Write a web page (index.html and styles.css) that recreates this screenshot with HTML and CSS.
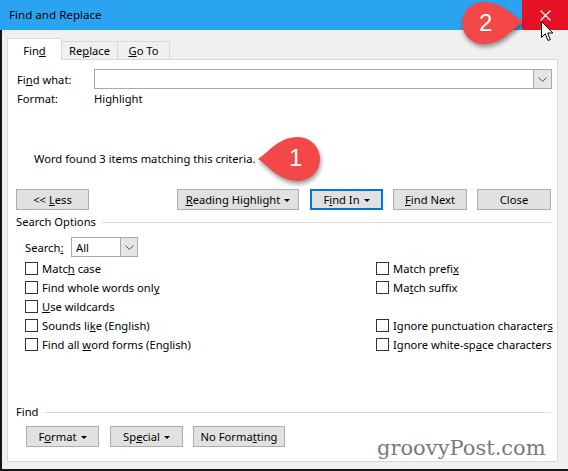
FILE: index.html
```html
<!DOCTYPE html>
<html>
<head>
<meta charset="utf-8">
<link rel="stylesheet" href="styles.css">
</head>
<body>
<div class="window">
  <div class="titlebar">
    <span class="title">Find and Replace</span>
    <div class="close">
      <svg width="11" height="11" viewBox="0 0 11 11"><path d="M0.5 0.5 L10.5 10.5 M10.5 0.5 L0.5 10.5" stroke="#fff" stroke-width="1.2" fill="none"/></svg>
    </div>
  </div>
  <div class="body">
    <div class="tabs">
      <div class="tab active"><span>Fin<u>d</u></span></div>
      <div class="tab t-replace"><span>Re<u>p</u>lace</span></div>
      <div class="tab t-goto"><span><u>G</u>o To</span></div>
    </div>
    <div class="panel">
      <div class="find-row">
        <span class="lbl">Fi<u>n</u>d what:</span>
        <div class="combo">
          <div class="combo-btn"><svg width="9" height="5" viewBox="0 0 9 5"><path d="M0.5 0.5 L4.5 4.5 L8.5 0.5" stroke="#555" fill="none"/></svg></div>
        </div>
      </div>
      <div class="format-row">
        <span class="lbl">Format:</span><span>Highlight</span>
      </div>
      <div class="message">Word found 3 items matching this criteria.</div>
      <div class="btn-row">
        <div class="btn b-less"><span>&lt;&lt; <u>L</u>ess</span></div>
        <div class="btn b-reading"><span><u>R</u>eading Highlight</span><i class="caret"></i></div>
        <div class="btn b-findin"><span>F<u>i</u>nd In</span><i class="caret"></i></div>
        <div class="btn b-next"><span><u>F</u>ind Next</span></div>
        <div class="btn b-close"><span>Close</span></div>
      </div>
      <div class="legend legend-top"><span>Search Options</span><span class="rule"></span></div>
      <div class="search-row">
        <span class="search-lbl">Search<u>:</u></span>
        <div class="select">
          <span class="select-val">All</span>
          <div class="select-btn"><svg width="9" height="5" viewBox="0 0 9 5"><path d="M0.5 0.5 L4.5 4.5 L8.5 0.5" stroke="#555" fill="none"/></svg></div>
        </div>
      </div>
      <div class="checks">
        <div class="chk"><span class="box"></span><span>Matc<u>h</u> case</span></div>
        <div class="chk"><span class="box"></span><span>Match prefi<u>x</u></span></div>
        <div class="chk"><span class="box"></span><span>Find whole words onl<u>y</u></span></div>
        <div class="chk"><span class="box"></span><span>Ma<u>t</u>ch suffix</span></div>
        <div class="chk"><span class="box"></span><span><u>U</u>se wildcards</span></div>
        <div class="chk empty"></div>
        <div class="chk"><span class="box"></span><span>Sounds li<u>k</u>e (English)</span></div>
        <div class="chk"><span class="box"></span><span>Ignore punctuation character<u>s</u></span></div>
        <div class="chk"><span class="box"></span><span>Find all <u>w</u>ord forms (English)</span></div>
        <div class="chk"><span class="box"></span><span>Ignore white-sp<u>a</u>ce characters</span></div>
      </div>
      <div class="legend legend-bottom"><span>Find</span><span class="rule"></span></div>
      <div class="btn-row2">
        <div class="btn b-format"><span>F<u>o</u>rmat</span><i class="caret"></i></div>
        <div class="btn b-special"><span>Sp<u>e</u>cial</span><i class="caret"></i></div>
        <div class="btn b-noformat"><span>No Forma<u>t</u>ting</span></div>
      </div>
    </div>
  </div>

  <div class="callout callout1">
    <svg width="80" height="64" viewBox="0 0 80 64"><path d="M8 29 C18 23 28 7 48 7 A22 22 0 1 1 48 51 C28 51 18 35 8 29 Z" fill="#f44848"/></svg>
    <span class="num num1">1</span>
  </div>
  <div class="callout callout2">
    <svg width="80" height="56" viewBox="0 0 80 56"><path d="M68 22 C58 16 48 2 28 2 A21 21 0 1 0 28 44 C48 44 58 28 68 22 Z" fill="#f44848"/></svg>
    <span class="num num2">2</span>
  </div>
  <svg class="cursor" width="13" height="21" viewBox="0 0 13 21"><path d="M0.5 0.5 L0.5 16.5 L4.3 12.8 L7 19.5 L9.3 18.6 L6.7 12 L11.8 12 Z" fill="#fff" stroke="#000" stroke-width="1" stroke-linejoin="miter"/></svg>
  <div class="watermark">groovyPost.com</div>
</div>
</body>
</html>
```
FILE: styles.css
```css
* { box-sizing: border-box; }
html, body { margin: 0; padding: 0; }
body {
  width: 568px;
  height: 471px;
  overflow: hidden;
  font-family: "Noto Sans", "Open Sans", sans-serif;
  font-size: 11.2px;
  color: #000;
  background: #f0f0f0;
}
u { text-decoration: underline; text-underline-offset: 1px; text-decoration-thickness: 1px; }

.window {
  position: relative;
  width: 568px;
  height: 471px;
  background: #f0f0f0;
}

.titlebar {
  height: 30px;
  background: #2aa4f0;
  display: flex;
  align-items: center;
  justify-content: space-between;
}
.title { padding-left: 9px; line-height: 16px; font-size: 11.6px; }
.close {
  width: 46px;
  height: 30px;
  background: #e81123;
  display: flex;
  align-items: center;
  justify-content: center;
}

.body {
  height: 441px;
  border-left: 2px solid #161616;
  border-bottom: 2px solid #161616;
  padding: 8px 10px 7px 5px;
  display: flex;
  flex-direction: column;
}

.tabs {
  height: 22px;
  margin-bottom: -1px;
  display: flex;
  align-items: flex-end;
}
.tab {
  height: 19px;
  border: 1px solid #d9d9d9;
  background: #f0f0f0;
  text-align: center;
  line-height: 16px;
  padding-top: 1px;
}
.tab.active {
  position: relative;
  z-index: 1;
  width: 55px;
  height: 22px;
  background: #fff;
  border-bottom: none;
  padding-top: 4px;
}
.t-replace { width: 56px; border-left: none; }
.t-goto { width: 52px; border-left: none; }

.panel {
  position: relative;
  z-index: 0;
  height: 403px;
  border: 1px solid #d9d9d9;
  background: #fff;
  padding: 0 5px 0 8px;
  display: flex;
  flex-direction: column;
}

.lbl { width: 78px; padding-left: 1px; flex: none; }
.find-row {
  margin-top: 9px;
  height: 20px;
  display: flex;
  align-items: center;
}
.combo {
  flex: 1;
  height: 20px;
  border: 1px solid #a9a9a9;
  display: flex;
  justify-content: flex-end;
}
.combo-btn {
  width: 18px;
  height: 18px;
  background: #e5e5e5;
  border-left: 1px solid #a9a9a9;
  display: flex;
  align-items: center;
  justify-content: center;
}
.format-row {
  margin-top: 1px;
  height: 18px;
  line-height: 18px;
  display: flex;
}
.message {
  margin-top: 42px;
  height: 18px;
  line-height: 18px;
  padding-left: 18px;
}

.btn {
  height: 21px;
  border: 1px solid #adadad;
  background: #e1e1e1;
  display: flex;
  align-items: center;
  justify-content: center;
  line-height: 16px;
  flex: none;
  white-space: nowrap;
}
.caret {
  display: inline-block;
  width: 0;
  height: 0;
  border-left: 3px solid transparent;
  border-right: 3px solid transparent;
  border-top: 3px solid #000;
  margin-left: 4px;
  margin-top: 1px;
}
.btn-row {
  margin-top: 21px;
  display: flex;
}
.b-less { width: 73px; }
.b-reading { width: 122px; margin-left: 88px; }
.b-findin { width: 73px; margin-left: 11px; border: 2px solid #0078d7; }
.b-next { width: 74px; margin-left: 10px; }
.b-close { width: 74px; margin-left: 10px; }

.legend {
  height: 16px;
  line-height: 16px;
  display: flex;
  align-items: center;
}
.rule {
  flex: 1;
  height: 1px;
  background: #dcdcdc;
  margin-left: 6px;
  margin-right: 1px;
}
.legend-top { margin-top: 4px; }
.legend-bottom { margin-top: auto; }

.search-row {
  margin-top: 7px;
  height: 20px;
  padding-left: 9px;
  display: flex;
  align-items: center;
}
.search-lbl { width: 46px; }
.select {
  width: 67px;
  height: 20px;
  border: 1px solid #a9a9a9;
  display: flex;
  align-items: center;
  justify-content: space-between;
}
.select-val { padding-left: 4px; }
.select-btn {
  width: 17px;
  height: 18px;
  background: #e5e5e5;
  border-left: 1px solid #a9a9a9;
  display: flex;
  align-items: center;
  justify-content: center;
}

.checks {
  margin-top: 2px;
  padding-left: 9px;
  display: grid;
  grid-template-columns: 351px 1fr;
  grid-auto-rows: 19px;
}
.chk {
  display: flex;
  align-items: center;
  white-space: nowrap;
}
.box {
  width: 13px;
  height: 13px;
  border: 1px solid #333;
  background: #fff;
  margin-right: 4px;
  flex: none;
}

.btn-row2 {
  margin-top: 6px;
  margin-bottom: 14px;
  padding-left: 10px;
  display: flex;
}
.b-format { width: 73px; }
.b-special { width: 73px; margin-left: 11px; }
.b-noformat { width: 92px; margin-left: 10px; }

.callout { position: absolute; }
.callout svg { display: block; filter: drop-shadow(1px 3px 2px rgba(0,0,0,0.4)); }
.callout1 { left: 250px; top: 130px; }
.callout2 { left: 455px; top: 0; }
.num {
  position: absolute;
  font-family: "Liberation Sans", Arial, sans-serif;
  font-size: 24px;
  line-height: 24px;
  color: #fff;
}
.num1 { left: 39px; top: 16px; }
.num2 { left: 24px; top: 11px; }

.cursor { position: absolute; left: 541px; top: 21px; }

.watermark {
  position: absolute;
  left: 377px;
  top: 436px;
  font-family: "DejaVu Serif", "Liberation Serif", serif;
  font-size: 21px;
  line-height: 24px;
  color: #7a7a7a;
  text-shadow: 0 0 2px #fff;
}
```
